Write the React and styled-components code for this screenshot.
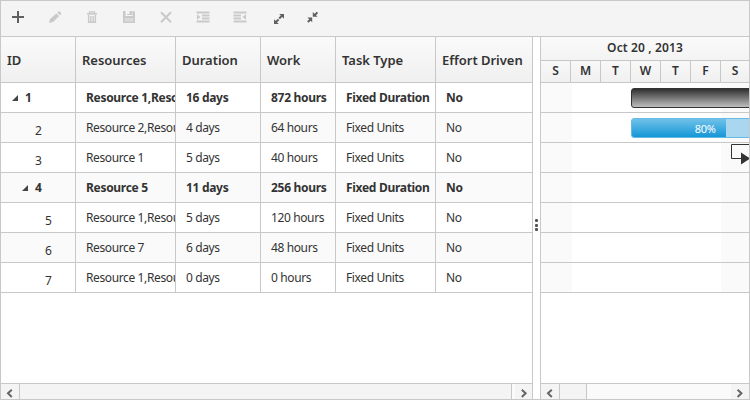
import React from "react";
import styled, { createGlobalStyle, css } from "styled-components";

const line = "#c8c8c8";

const GlobalStyle = createGlobalStyle`
  * { box-sizing: border-box; }
  body { margin: 0; background: #fff; }
`;

const Gantt = styled.div`
  width: 750px;
  height: 400px;
  border: 1px solid ${line};
  display: flex;
  flex-direction: column;
  overflow: hidden;
  background: #fff;
  color: #333;
  font-family: "Noto Sans", "Open Sans", sans-serif;
  font-size: 12px;
`;

const Toolbar = styled.div`
  height: 36px;
  flex: none;
  display: flex;
  padding-left: 8px;
  background: #f4f4f4;
  border-bottom: 1px solid ${line};
`;

const ToolButton = styled.button`
  width: 18px;
  height: 34px;
  margin-right: 19px;
  padding: 0;
  border: 0;
  background: none;
  color: ${(p) => (p.disabled ? "#c9c9c9" : "#606060")};
  svg { display: block; }
`;

const Panes = styled.div`
  flex: 1;
  min-height: 0;
  display: flex;
`;

const GridPane = styled.section`
  width: 532px;
  flex: none;
  display: flex;
  flex-direction: column;
  border-right: 1px solid ${line};
`;

const Splitter = styled.div`
  width: 7px;
  flex: none;
  display: flex;
  flex-direction: column;
  align-items: flex-start;
  padding: 182px 0 0 2px;
  gap: 1.5px;
`;

const Dot = styled.i`
  width: 3px;
  height: 3px;
  flex: none;
  background: #555;
  border-radius: 1px;
`;

const ChartPane = styled.section`
  width: 209px;
  flex: none;
  display: flex;
  flex-direction: column;
  border-left: 1px solid ${line};
`;

const columns = "75px 100px 85px 75px 100px 96px";

const GridHeader = styled.div`
  display: grid;
  grid-template-columns: ${columns};
  height: 46px;
  flex: none;
  background: linear-gradient(#fafafa, #f0f0f0);
  border-bottom: 1px solid ${line};
`;

const HeadCell = styled.div`
  border-right: ${(p) => (p.$last ? 0 : `1px solid ${line}`)};
  padding: 2px 0 0 6px;
  line-height: 43px;
  font-size: 13px;
  font-weight: 600;
  letter-spacing: -0.03px;
  white-space: nowrap;
  overflow: hidden;
`;

const GridRow = styled.div`
  display: grid;
  grid-template-columns: ${columns};
  height: 30px;
  flex: none;
  background: ${(p) => (p.$alt ? "#fafafa" : "#fff")};
  border-bottom: 1px solid ${line};
  font-weight: ${(p) => (p.$parent ? 700 : 400)};
`;

const Cell = styled.div`
  border-right: ${(p) => (p.$last ? 0 : `1px solid ${line}`)};
  padding-left: 10px;
  line-height: 30px;
  letter-spacing: ${(p) => (p.$parent ? -0.3 : -0.38)}px;
  white-space: nowrap;
  overflow: hidden;
`;

const IdCell = styled.div`
  display: flex;
  border-right: 1px solid ${line};
  padding-left: ${(p) => p.$indent}px;
  line-height: 30px;
  overflow: hidden;
  ${(p) =>
    !p.$parent &&
    css`
      padding-top: 3px;
    `}
`;

const Arrow = styled.svg`
  display: block;
  width: 6px;
  height: 6px;
  margin: 12px 7px 0 0;
  flex: none;
`;

const ScrollBar = styled.div`
  height: 16px;
  flex: none;
  margin-top: auto;
  display: flex;
  border-top: 1px solid ${line};
  background: #fafafa;
`;

const ScrollButton = styled.div`
  width: ${(p) => p.$width}px;
  flex: none;
  background: #f4f4f4;
  svg { display: block; }
`;

const Thumb = styled.div`
  width: ${(p) => p.$width}px;
  flex: none;
  background: #f4f4f4;
  border: solid ${line};
  border-width: 0 1px;
`;

const Track = styled.div`
  flex: 1;
  background: #fafafa;
`;

const WeekLabel = styled.div`
  height: 24px;
  flex: none;
  text-align: center;
  line-height: 22px;
  font-size: 12px;
  font-weight: 600;
  letter-spacing: 0.12px;
  background: linear-gradient(#fafafa, #f3f3f3);
  border-bottom: 1px solid ${line};
`;

const DayRow = styled.div`
  height: 22px;
  flex: none;
  display: grid;
  grid-template-columns: repeat(6, 30px) 28px;
  background: linear-gradient(#f8f8f8, #f0f0f0);
  border-bottom: 1px solid ${line};
`;

const Day = styled.div`
  text-align: center;
  line-height: 20px;
  font-size: 12px;
  font-weight: 600;
  border-right: ${(p) => (p.$last ? 0 : `1px solid ${line}`)};
`;

const ChartBody = styled.div`
  position: relative;
  height: 210px;
  flex: none;
  overflow: hidden;
  background: linear-gradient(90deg, #fafafa 31px, #fff 31px 180px, #fafafa 180px);
`;

const ChartRow = styled.div`
  height: 30px;
  border-bottom: 1px solid ${line};
`;

const SummaryBar = styled.div`
  position: absolute;
  left: 90px;
  top: 5px;
  width: 140px;
  height: 20px;
  border: 1px solid #333;
  border-radius: 3px;
  background: linear-gradient(#303030, #bebebe);
`;

const TaskBar = styled.div`
  position: absolute;
  left: 90px;
  top: 35px;
  width: 120px;
  height: 20px;
  border: 1px solid #66bbe6;
  border-radius: 3px;
  background: #a9d7ef;
  overflow: hidden;
`;

const Progress = styled.div`
  height: 18px;
  padding-right: 11px;
  text-align: right;
  line-height: 20px;
  font-size: 11px;
  letter-spacing: -0.4px;
  color: #fff;
  background: linear-gradient(#70c1e9, #1597d7);
`;

const Connector = styled.svg`
  position: absolute;
  left: 189px;
  top: 60px;
`;

const tools = [
  { name: "Add", on: true, art: <path d="M9 10v12M3 16h12" stroke="currentColor" strokeWidth="2" /> },
  {
    name: "Edit",
    art: (
      <g fill="currentColor">
        <path d="M3 22l1-4 6.4-5.6 2.8 2.7L7 21z" />
        <path d="M11.2 11.6l1.3-1.1h1.3l1.4 1.4v1.2L14 14.3z" />
      </g>
    ),
  },
  {
    name: "Delete",
    art: (
      <g stroke="currentColor" fill="none">
        <path d="M4 12.8h10" strokeWidth="1.6" />
        <path d="M6.5 12v-1.2h5V12" strokeWidth="1.2" />
        <path d="M5.6 14v7.3h6.8V14M7.8 15v6M10.2 15v6" strokeWidth="1.4" />
      </g>
    ),
  },
  {
    name: "Save",
    art: (
      <g>
        <path fill="currentColor" d="M3 10h2.5v5h7v-5H14l1 1v11H3zM9.5 10H12v4H7v-1h2.5z" />
        <path fill="#dadada" d="M4.5 17h9v3.5h-9z" />
      </g>
    ),
  },
  { name: "Cancel", art: <path d="M4 11.2l10 10M14 11.2l-10 10" stroke="currentColor" strokeWidth="2" /> },
  {
    name: "Indent",
    art: (
      <g>
        <path d="M2.5 11.5h13M8 14.5h7.5M8 17.5h7.5M2.5 20.5h13" stroke="currentColor" strokeWidth="2" />
        <path d="M3 13.3l3.5 2.8L3 18.7z" fill="currentColor" />
      </g>
    ),
  },
  {
    name: "Outdent",
    art: (
      <g>
        <path d="M2.5 11.5h13M2.5 14.5H10M2.5 17.5H10M2.5 20.5h13" stroke="currentColor" strokeWidth="2" />
        <path d="M15 13.3l-3.5 2.8 3.5 2.6z" fill="currentColor" />
      </g>
    ),
  },
  {
    name: "Expand all",
    on: true,
    art: (
      <g>
        <path d="M11.2 17.4l3-2.8M7.6 21.2l3-2.8" stroke="currentColor" strokeWidth="2" />
        <path d="M11.2 13H16v4.8zM6 18.2V23h4.8z" fill="currentColor" />
      </g>
    ),
  },
  {
    name: "Collapse all",
    on: true,
    art: (
      <g>
        <path d="M9.6 14.2l2.8-2.8M2.8 21l3-2.8" stroke="currentColor" strokeWidth="2" />
        <path d="M7.8 11v4.8h4.8zM2.4 16.4h4.8v4.8z" fill="currentColor" />
      </g>
    ),
  },
];

const headers = ["ID", "Resources", "Duration", "Work", "Task Type", "Effort Driven"];

const rows = [
  { id: 1, level: 0, parent: true, cells: ["Resource 1,Resource 2", "16 days", "872 hours", "Fixed Duration", "No"] },
  { id: 2, level: 1, cells: ["Resource 2,Resource 3", "4 days", "64 hours", "Fixed Units", "No"] },
  { id: 3, level: 1, cells: ["Resource 1", "5 days", "40 hours", "Fixed Units", "No"] },
  { id: 4, level: 1, parent: true, cells: ["Resource 5", "11 days", "256 hours", "Fixed Duration", "No"] },
  { id: 5, level: 2, cells: ["Resource 1,Resource 5", "5 days", "120 hours", "Fixed Units", "No"] },
  { id: 6, level: 2, cells: ["Resource 7", "6 days", "48 hours", "Fixed Units", "No"] },
  { id: 7, level: 2, cells: ["Resource 1,Resource 5", "0 days", "0 hours", "Fixed Units", "No"] },
];

function Chevron({ right, x }) {
  return (
    <svg width="18" height="15">
      <path
        d={right ? `M${x} 5.7l3.8 3.6-3.8 3.6` : `M${x + 3.8} 5.7l-3.8 3.6 3.8 3.6`}
        fill="none"
        stroke="#666"
        strokeWidth="2"
      />
    </svg>
  );
}

export default function App() {
  return (
    <>
      <GlobalStyle />
      <Gantt>
        <Toolbar>
          {tools.map((t) => (
            <ToolButton key={t.name} disabled={!t.on} aria-label={t.name}>
              <svg width="18" height="34" viewBox="0 0 18 34" fill="none">
                {t.art}
              </svg>
            </ToolButton>
          ))}
        </Toolbar>
        <Panes>
          <GridPane>
            <GridHeader>
              {headers.map((label, i) => (
                <HeadCell key={label} $last={i === headers.length - 1}>
                  {label}
                </HeadCell>
              ))}
            </GridHeader>
            {rows.map((r, i) => (
              <GridRow key={r.id} $alt={i % 2 === 1} $parent={r.parent}>
                <IdCell $parent={r.parent} $indent={r.parent ? 11 + r.level * 10 : 24 + r.level * 10 - 10 + 10}>
                  {r.parent && (
                    <Arrow viewBox="0 0 6 6">
                      <path d="M6 0v6H0z" fill="#444" />
                    </Arrow>
                  )}
                  {r.id}
                </IdCell>
                {r.cells.map((c, j) => (
                  <Cell key={j} $parent={r.parent} $last={j === r.cells.length - 1}>
                    {c}
                  </Cell>
                ))}
              </GridRow>
            ))}
            <ScrollBar>
              <ScrollButton $width={18}>
                <Chevron x={7} />
              </ScrollButton>
              <Thumb $width={493} />
              <Track />
              <ScrollButton $width={17}>
                <Chevron right x={6.8} />
              </ScrollButton>
            </ScrollBar>
          </GridPane>
          <Splitter>
            <Dot />
            <Dot />
            <Dot />
          </Splitter>
          <ChartPane>
            <WeekLabel>Oct 20 , 2013</WeekLabel>
            <DayRow>
              {["S", "M", "T", "W", "T", "F", "S"].map((d, i) => (
                <Day key={i} $last={i === 6}>
                  {d}
                </Day>
              ))}
            </DayRow>
            <ChartBody>
              {rows.map((r) => (
                <ChartRow key={r.id} />
              ))}
              <SummaryBar />
              <TaskBar>
                <Progress style={{ width: "80%" }}>80%</Progress>
              </TaskBar>
              <Connector width="19" height="24">
                <path d="M19 1.5H1.5v14H11" fill="none" stroke="#333" />
                <path d="M11 9.5l9 6-9 6z" fill="#333" />
              </Connector>
            </ChartBody>
            <ScrollBar>
              <ScrollButton $width={18}>
                <Chevron x={7} />
              </ScrollButton>
              <Thumb $width={28} />
              <Track />
              <ScrollButton $width={18}>
                <Chevron right x={6.6} />
              </ScrollButton>
            </ScrollBar>
          </ChartPane>
        </Panes>
      </Gantt>
    </>
  );
}
